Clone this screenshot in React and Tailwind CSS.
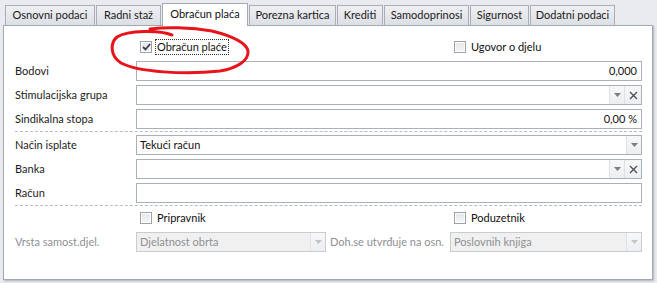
import React from "react";

const tabs = [
  { label: "Osnovni podaci", w: "w-[90px]" },
  { label: "Radni staž", w: "w-[65px]" },
  { label: "Obračun plaća", w: "w-[86px]", active: true },
  { label: "Porezna kartica", w: "w-[87px]" },
  { label: "Krediti", w: "w-[46px]" },
  { label: "Samodoprinosi", w: "w-[85px]" },
  { label: "Sigurnost", w: "w-[59px]" },
  { label: "Dodatni podaci", w: "w-[85px]" },
];

function Arrow({ disabled }) {
  return (
    <svg width="7" height="4" viewBox="0 0 7 4">
      <path d="M0 0h7L3.5 4z" fill={disabled ? "#c4c4c4" : "#7a7d82"} />
    </svg>
  );
}

function DropBtn({ disabled }) {
  return (
    <div className="w-[15px] h-full flex items-center justify-center border-l border-[#dfe1e5] bg-gradient-to-b from-[#f7f8f9] to-[#eceef1]">
      <Arrow disabled={disabled} />
    </div>
  );
}

function ClearBtn() {
  return (
    <div className="w-[17px] h-full flex items-center justify-center border-l border-[#dfe1e5] bg-gradient-to-b from-[#f7f8f9] to-[#eceef1]">
      <svg width="9" height="9" viewBox="0 0 9 9">
        <path d="M1 1l7 7M8 1L1 8" stroke="#4b4e54" strokeWidth="1.3" />
      </svg>
    </div>
  );
}

function Field({ value, align = "left", drop, clear, disabled, className = "flex-1" }) {
  return (
    <div
      className={`${className} h-[20px] flex border ${
        disabled ? "border-[#c9ccd1] bg-[#f0f0f0]" : "border-[#aab0b8] bg-white"
      }`}
    >
      <div
        className={`flex-1 flex items-center px-[3px] ${align === "right" ? "justify-end pr-[4px]" : ""} ${
          disabled ? "text-[#8e9094]" : "text-[#111]"
        }`}
      >
        {value}
      </div>
      {drop && <DropBtn disabled={disabled} />}
      {clear && <ClearBtn />}
    </div>
  );
}

function Check({ checked, label, focus }) {
  return (
    <div className="flex items-center h-[16px]">
      <div className="w-[12px] h-[12px] border border-[#9da1a8] bg-white p-[1px] flex">
        <div className="flex-1 bg-gradient-to-b from-[#e6e7ea] to-[#f4f5f6] flex items-center justify-center">
          {checked && (
            <svg width="9" height="8" viewBox="0 0 9 8">
              <path d="M1 4l2.5 2.5L8 1" stroke="#3b3e44" strokeWidth="1.8" fill="none" />
            </svg>
          )}
        </div>
      </div>
      <span
        className={`ml-[3px] px-[1px] leading-[14px] text-[#111] ${
          focus ? "border border-dotted border-[#333]" : "border border-transparent"
        }`}
      >
        {label}
      </span>
    </div>
  );
}

function Row({ label, children }) {
  return (
    <div className="flex items-center h-[20px]">
      <div className="w-[121px] text-[#1b1b1b]">{label}</div>
      {children}
    </div>
  );
}

function Sep() {
  return (
    <div className="h-[6px] pt-[2px]">
      <div className="border-t border-dashed border-[#b9bcc2]" />
    </div>
  );
}

export default function App() {
  return (
    <div className="relative w-[657px] h-[283px] overflow-hidden bg-[#e9ebf0] font-['Lato','Noto_Sans',sans-serif] text-[11px]">
      {/* tabs */}
      <div className="flex items-end gap-[1px] pl-[5px] h-[25px]">
        {tabs.map((t) =>
          t.active ? (
            <div
              key={t.label}
              className={`${t.w} relative z-10 h-[23px] -mb-[1px] bg-white border border-b-0 border-[#a3a9b1] flex items-center justify-center text-[#111] pb-[2px]`}
            >
              {t.label}
            </div>
          ) : (
            <div
              key={t.label}
              className={`${t.w} h-[20px] bg-gradient-to-b from-[#eff0f3] to-[#dcdfe4] border border-b-0 border-[#a9aeb6] flex items-center justify-center text-[#1b1b1b]`}
            >
              {t.label}
            </div>
          )
        )}
      </div>

      {/* panel */}
      <div className="ml-[3px] w-[650px] h-[255px] bg-white border border-[#a3a9b1] shadow-[1px_1px_2px_rgba(0,0,0,0.25)] pl-[11px] pr-[10px]">
        <div className="flex items-center mt-[13px] pl-[125px]">
          <div className="w-[314px]">
            <Check checked label="Obračun plaće" focus />
          </div>
          <Check label="Ugovor o djelu" />
        </div>

        <div className="flex flex-col gap-[4px] mt-[6px]">
          <Row label="Bodovi">
            <Field value="0,000" align="right" />
          </Row>
          <Row label="Stimulacijska grupa">
            <Field drop clear />
          </Row>
          <Row label="Sindikalna stopa">
            <Field value="0,00 %" align="right" />
          </Row>
        </div>

        <Sep />

        <div className="flex flex-col gap-[4px]">
          <Row label="Način isplate">
            <Field value="Tekući račun" drop />
          </Row>
          <Row label="Banka">
            <Field drop clear />
          </Row>
          <Row label="Račun">
            <Field />
          </Row>
        </div>

        <Sep />

        <div className="flex items-center mt-[1px] pl-[125px]">
          <div className="w-[314px]">
            <Check label="Pripravnik" />
          </div>
          <Check label="Poduzetnik" />
        </div>

        <div className="flex items-center h-[20px] mt-[6px]">
          <div className="w-[121px] text-[#8e9094]">Vrsta samost.djel.</div>
          <Field className="w-[190px]" value="Djelatnost obrta" drop disabled />
          <div className="w-[124px] pl-[4px] text-[#8e9094]">Doh.se utvrđuje na osn.</div>
          <Field value="Poslovnih knjiga" drop disabled />
        </div>
      </div>

      {/* red hand-drawn annotation */}
      <svg className="absolute inset-0 pointer-events-none" width="657" height="283" viewBox="0 0 657 283">
        <path
          d="M172 35 C160 30 128 30 117 37 C110 43 110 56 121 63 C138 72 185 75 220 71 C238 68 249 60 248 51 C246 42 232 36 212 31 C190 27 165 27 150 29"
          fill="none"
          stroke="#e8141b"
          strokeWidth="3"
          strokeLinecap="round"
        />
      </svg>
    </div>
  );
}
